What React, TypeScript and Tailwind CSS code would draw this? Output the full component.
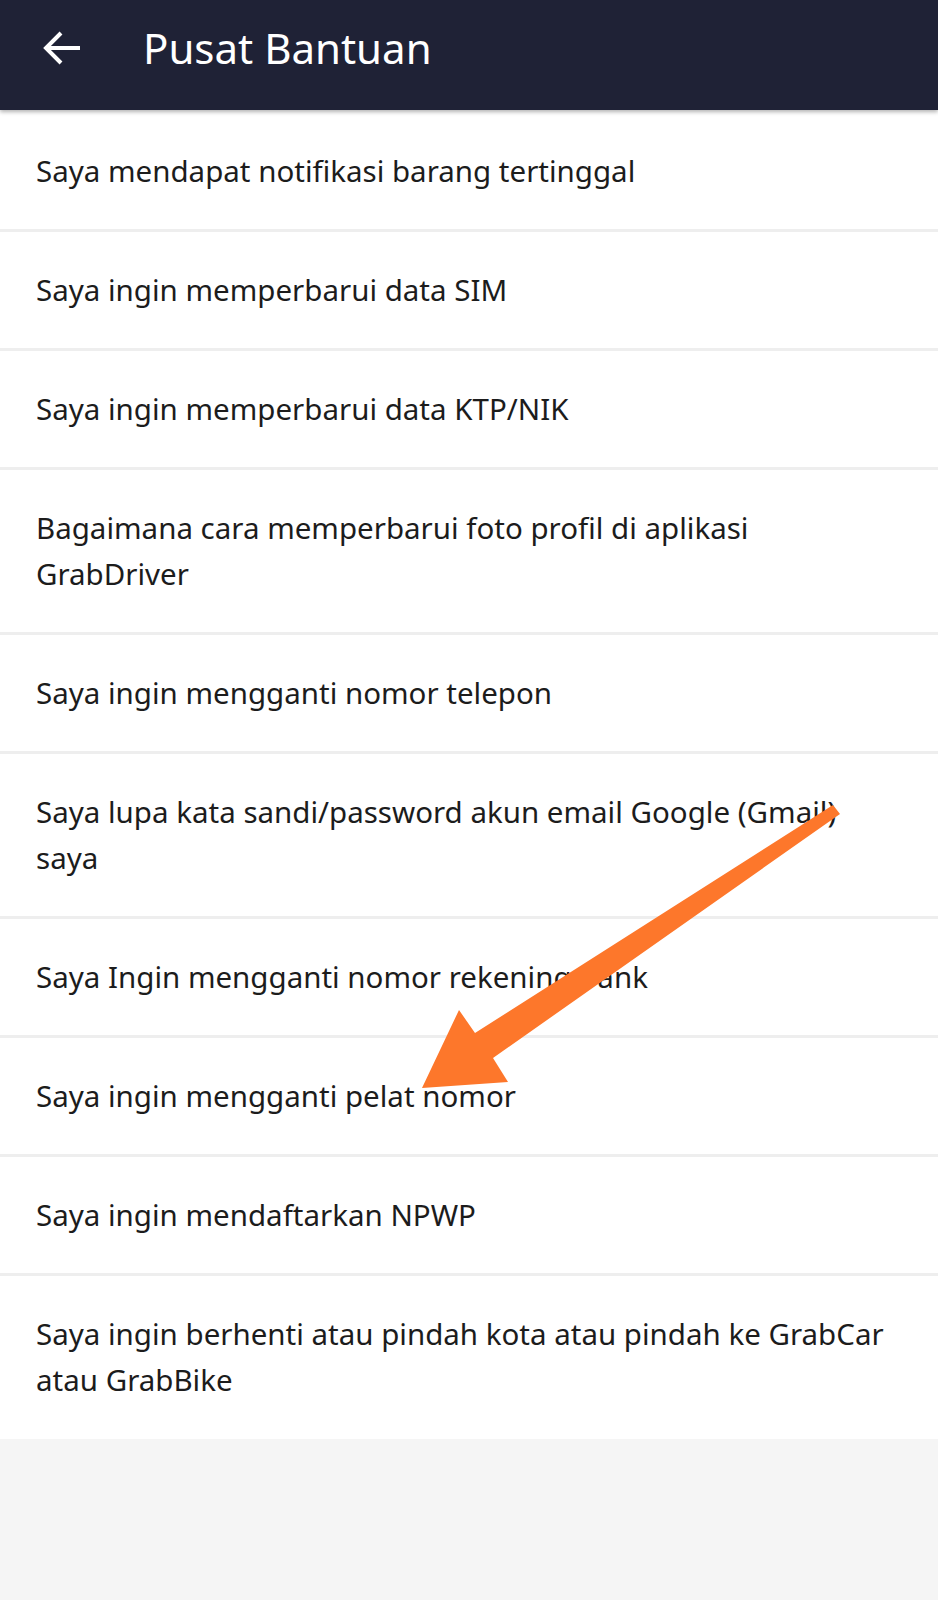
const topics = [
  "Saya mendapat notifikasi barang tertinggal",
  "Saya ingin memperbarui data SIM",
  "Saya ingin memperbarui data KTP/NIK",
  "Bagaimana cara memperbarui foto profil di aplikasi GrabDriver",
  "Saya ingin mengganti nomor telepon",
  "Saya lupa kata sandi/password akun email Google (Gmail) saya",
  "Saya Ingin mengganti nomor rekening bank",
  "Saya ingin mengganti pelat nomor",
  "Saya ingin mendaftarkan NPWP",
  "Saya ingin berhenti atau pindah kota atau pindah ke GrabCar atau GrabBike",
];

function BackArrow() {
  return (
    <svg width="38" height="36" viewBox="0 0 38 36" fill="none">
      <path
        d="M3 18H37M18 3L3 18L18 33"
        stroke="white"
        strokeWidth="4"
        strokeLinejoin="miter"
      />
    </svg>
  );
}

export default function App() {
  return (
    <div className="relative min-h-[1600px] w-[938px] bg-[#f5f5f5] font-['Noto_Sans',sans-serif]">
      <header className="relative z-10 flex h-[110px] items-center bg-[#1f2236] pb-[14px] shadow-[0_2px_4px_rgba(0,0,0,0.3)]">
        <div className="ml-[43px] flex items-center">
          <BackArrow />
        </div>
        <h1 className="ml-[62px] text-[42px] leading-none font-normal text-white">
          Pusat Bantuan
        </h1>
      </header>

      <ul className="bg-white pt-[3px]">
        {topics.map((t, i) => (
          <li
            key={t}
            className={`pl-[36px] pr-[40px] py-[35px] text-[29.5px] leading-[46px] text-[#1c1c1c] ${
              i < topics.length - 1 ? "border-b-[3px] border-[#eeeeee]" : "pb-[36px]"
            }`}
          >
            {t}
          </li>
        ))}
      </ul>

      {/* orange annotation arrow */}
      <svg
        className="pointer-events-none absolute left-0 top-0"
        width="938"
        height="1600"
        viewBox="0 0 938 1600"
      >
        <polygon
          points="833,805 840,814 493,1058 508,1082 422,1088 459,1010 475,1033"
          fill="#fd772b"
        />
      </svg>
    </div>
  );
}
